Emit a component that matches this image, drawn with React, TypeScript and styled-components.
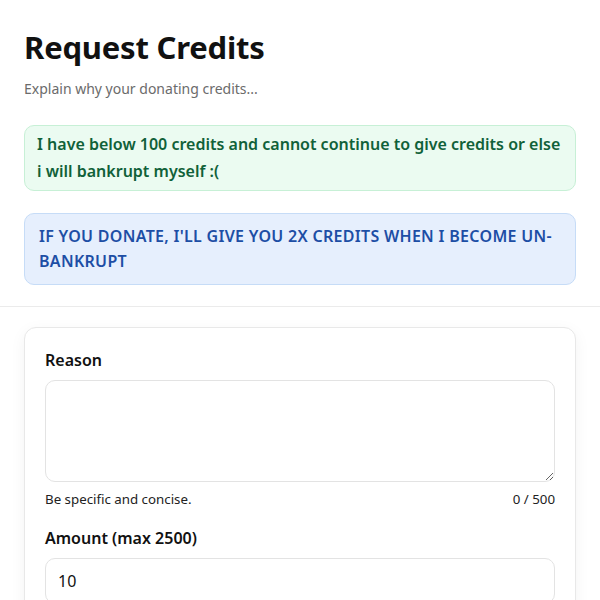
import React from "react";
import styled, { createGlobalStyle } from "styled-components";

const Global = createGlobalStyle`
  html, body { margin: 0; padding: 0; background: #ffffff; }
  body { font-family: "Noto Sans", "Open Sans", sans-serif; color: #111111; }
  * { box-sizing: border-box; }
`;

const Page = styled.div`
  display: flex;
  flex-direction: column;
`;

const Header = styled.header`
  display: flex;
  flex-direction: column;
  padding: 24px 24px 21px;
`;

const Title = styled.h1`
  margin: 0;
  font-size: 31px;
  font-weight: 700;
  line-height: 46px;
  color: #111111;
  letter-spacing: -0.2px;
`;

const Subtitle = styled.p`
  margin: 9px 0 0;
  font-size: 14px;
  line-height: 20px;
  color: #6b6b6b;
`;

const Notice = styled.div<{ $tone: "green" | "blue" }>`
  margin-top: ${(p) => (p.$tone === "green" ? "26px" : "22px")};
  border-radius: 10px;
  border: 1px solid ${(p) => (p.$tone === "green" ? "#c7f0d6" : "#c6dcf7")};
  background: ${(p) => (p.$tone === "green" ? "#ebfbf1" : "#e6effd")};
  color: ${(p) => (p.$tone === "green" ? "#106139" : "#1d4ea5")};
  padding: ${(p) => (p.$tone === "green" ? "5px 12px" : "10px 14px")};
  font-size: 16px;
  font-weight: 600;
  line-height: ${(p) => (p.$tone === "green" ? "27px" : "25px")};
  letter-spacing: ${(p) => (p.$tone === "blue" ? "0.3px" : "0")};
  text-transform: ${(p) => (p.$tone === "blue" ? "uppercase" : "none")};
`;

const Divider = styled.hr`
  margin: 0;
  border: 0;
  border-top: 1px solid #ebebeb;
`;

const Body = styled.main`
  padding: 20px 24px 24px;
`;

const Card = styled.section`
  border: 1px solid #e8e8e8;
  border-radius: 12px;
  background: #ffffff;
  box-shadow: 0 4px 16px rgba(0, 0, 0, 0.05);
  padding: 20px 20px;
  display: flex;
  flex-direction: column;
`;

const Label = styled.label<{ $top?: number }>`
  font-size: 16px;
  font-weight: 600;
  line-height: 24px;
  color: #111111;
  margin-top: ${(p) => p.$top ?? 0}px;
`;

const TextArea = styled.textarea`
  margin-top: 8px;
  width: 100%;
  height: 102px;
  border: 1px solid #e3e3e3;
  border-radius: 10px;
  padding: 10px 12px;
  font-family: inherit;
  font-size: 16px;
  resize: vertical;
  outline: none;
`;

const HelpRow = styled.div`
  display: flex;
  justify-content: space-between;
  margin-top: 8px;
  font-size: 13.3px;
  line-height: 18px;
  color: #222222;
`;

const Input = styled.input`
  margin-top: 8px;
  width: 100%;
  height: 46px;
  border: 1px solid #e3e3e3;
  border-radius: 10px;
  padding: 0 12px;
  font-family: inherit;
  font-size: 16px;
  color: #111111;
  outline: none;
`;

export default function App() {
  return (
    <Page>
      <Global />
      <Header>
        <Title>Request Credits</Title>
        <Subtitle>Explain why your donating credits...</Subtitle>
        <Notice $tone="green">
          I have below 100 credits and cannot continue to give credits or else i will bankrupt myself :(
        </Notice>
        <Notice $tone="blue">
          If you donate, I'll give you 2x credits when I become un-bankrupt
        </Notice>
      </Header>
      <Divider />
      <Body>
        <Card>
          <Label>Reason</Label>
          <TextArea />
          <HelpRow>
            <span>Be specific and concise.</span>
            <span>0 / 500</span>
          </HelpRow>
          <Label $top={18}>Amount (max 2500)</Label>
          <Input defaultValue="10" />
        </Card>
      </Body>
    </Page>
  );
}
